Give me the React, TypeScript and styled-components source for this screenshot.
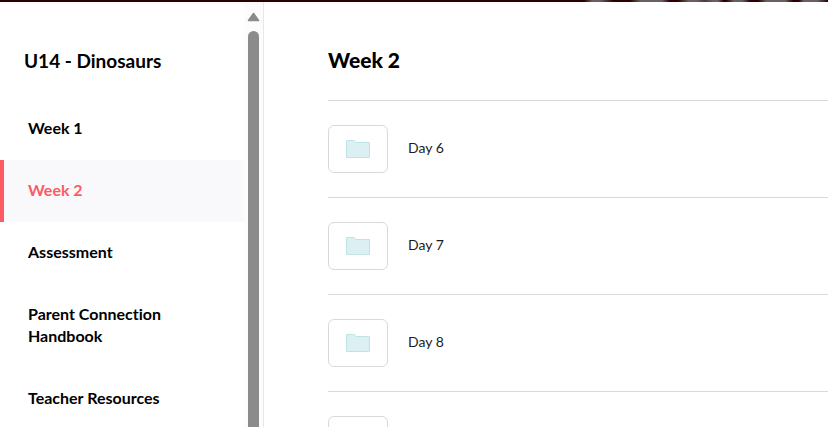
import React from "react";
import styled, { createGlobalStyle } from "styled-components";

const GlobalStyle = createGlobalStyle`
  *, *::before, *::after { box-sizing: border-box; }
  body {
    margin: 0;
    background: #fff;
    color: #000;
    font-family: Lato, "Open Sans", sans-serif;
    font-variant-ligatures: none;
    overflow: hidden;
  }
  h1, h2, ul { margin: 0; padding: 0; }
  ul { list-style: none; }
`;

const Page = styled.div`
  display: flex;
  flex-direction: column;
  height: 100vh;
`;

const Banner = styled.div`
  flex: none;
  height: 2px;
  background: linear-gradient(
      90deg,
      #2a0003 0 9%, #696061 12% 15%, #2a0003 20% 26%,
      #696061 30% 38%, #2a0003 41% 44%, #696061 48% 51%,
      #4d3a3d 54%, #696061 57% 59%, #2a0003 61% 62%,
      #696061 65% 68%, #2a0003 71% 74%, #696061 77% 84%,
      #2a0003 87% 89%, #696061 91% 96%, #2a0003 100%
    )
    right / 268px 100% no-repeat #2a0003;
`;

const Columns = styled.div`
  display: flex;
  flex: 1;
  min-height: 0;
`;

const Sidebar = styled.aside`
  display: flex;
  flex: none;
  width: 264px;
  border-right: 1px solid #e8e8e8;
  overflow: hidden;
`;

const SidebarContent = styled.div`
  flex: 1;
  min-width: 0;
`;

const UnitTitle = styled.h2`
  padding: 47px 24px 25px;
  font-size: 19px;
  line-height: 24px;
  font-weight: 700;
`;

const NavLink = styled.a<{ $active: boolean }>`
  display: block;
  padding: 19px 48px 21px 24px;
  border-left: 4px solid ${(p) => (p.$active ? "#fb5b65" : "transparent")};
  background: ${(p) => (p.$active ? "#f9f9fc" : "transparent")};
  color: ${(p) => (p.$active ? "#fb5b65" : "#000")};
  font-size: 16px;
  line-height: 22px;
  font-weight: 700;
  text-decoration: none;
`;

const ScrollTrack = styled.div`
  display: flex;
  flex: none;
  flex-direction: column;
  align-items: center;
  gap: 9px;
  width: 19px;
  padding-top: 10px;
  background: #fcfcfc;
`;

const ScrollArrow = styled.svg`
  flex: none;
  display: block;
`;

const ScrollThumb = styled.div`
  flex: 1;
  width: 11px;
  border-radius: 6px 6px 0 0;
  background: #8b8b8b;
`;

const Main = styled.main`
  flex: 1;
  min-width: 0;
  padding-left: 64px;
  overflow: hidden;
`;

const PageTitle = styled.h1`
  padding: 46px 0 28px;
  font-size: 21px;
  line-height: 24px;
  font-weight: 900;
`;

const DayLink = styled.a`
  display: flex;
  align-items: center;
  gap: 20px;
  padding: 24px 0;
  border-top: 1px solid #d9d9d9;
  color: #1c1c1c;
  font-size: 14px;
  line-height: 20px;
  text-decoration: none;
`;

const DayName = styled.span`
  padding-bottom: 2px;
`;

const Thumbnail = styled.span`
  display: flex;
  align-items: center;
  justify-content: center;
  width: 60px;
  height: 48px;
  border: 1px solid #d9d9d9;
  border-radius: 6px;
`;

const sections = ["Week 1", "Week 2", "Assessment", "Parent Connection Handbook", "Teacher Resources"];

const folders = [
  { id: 6, name: "Day 6" },
  { id: 7, name: "Day 7" },
  { id: 8, name: "Day 8" },
  { id: 9 },
];

function FolderIcon() {
  return (
    <svg width="24" height="18" viewBox="0 0 24 18" aria-hidden="true">
      <path d="M.5.5H8.3L10 2.5H23.5V17.5H.5Z" fill="#dcf0f3" stroke="#bfe4e8" />
    </svg>
  );
}

export default function App() {
  return (
    <>
      <GlobalStyle />
      <Page>
        <Banner />
        <Columns>
          <Sidebar>
            <SidebarContent>
              <UnitTitle>U14 - Dinosaurs</UnitTitle>
              <nav aria-label="Unit sections">
                <ul>
                  {sections.map((name) => (
                    <li key={name}>
                      <NavLink
                        href="#"
                        $active={name === "Week 2"}
                        aria-current={name === "Week 2" ? "page" : undefined}
                      >
                        {name}
                      </NavLink>
                    </li>
                  ))}
                </ul>
              </nav>
            </SidebarContent>
            <ScrollTrack aria-hidden="true">
              <ScrollArrow width="13" height="10" viewBox="0 0 13 10">
                <path d="M6.5 1.5L11.5 8.5H1.5Z" fill="#8b8b8b" stroke="#8b8b8b" strokeWidth="1.6" strokeLinejoin="round" />
              </ScrollArrow>
              <ScrollThumb />
            </ScrollTrack>
          </Sidebar>
          <Main>
            <PageTitle>Week 2</PageTitle>
            <ul>
              {folders.map(({ id, name }) => (
                <li key={id}>
                  <DayLink href="#" aria-label={name ?? "Folder"}>
                    <Thumbnail>
                      <FolderIcon />
                    </Thumbnail>
                    {name && <DayName>{name}</DayName>}
                  </DayLink>
                </li>
              ))}
            </ul>
          </Main>
        </Columns>
      </Page>
    </>
  );
}
